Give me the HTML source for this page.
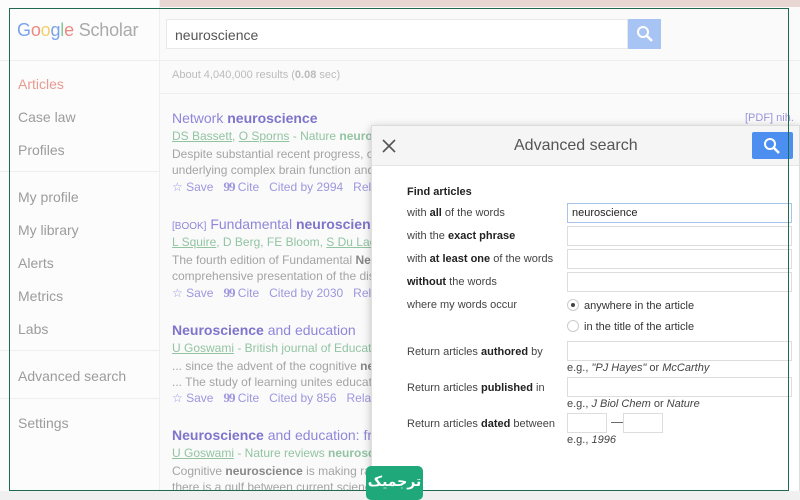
<!DOCTYPE html>
<html><head><meta charset="utf-8"><style>
*{margin:0;padding:0;box-sizing:border-box}
body{width:800px;height:500px;overflow:hidden;background:#fafafa;font-family:"Liberation Sans",Arial,sans-serif;position:relative;color:#777}
.a{position:absolute;white-space:nowrap}
.side{position:absolute;left:0;top:0;width:160px;height:500px;background:#fcfcfc;border-right:1px solid #eee}
.s{position:absolute;left:18px;font-size:14px;color:#9c9c9c}
.t{font-size:14px;color:#8f86da}
.t b{color:#7e74cc}
.au{font-size:12px;color:#92c4a2}
.au u{color:#92c4a2}
.sn{font-size:12px;color:#a4a4a4;line-height:16px}
.sn b{color:#888}
.act{font-size:12px;color:#9d97de}
.q{font-family:"Liberation Serif",serif;font-weight:bold;font-size:13px;letter-spacing:-1px}
.dlg{position:absolute;left:371px;top:125px;width:429px;height:368px;background:#fff;box-shadow:0 2px 8px rgba(0,0,0,.25);border:1px solid #ddd}
.hd{position:absolute;left:0;top:0;width:100%;height:40px;background:#f5f5f5;border-bottom:1px solid #e5e5e5}
.l{position:absolute;left:35px;font-size:11px;color:#444}
.l b{color:#222}
.in{position:absolute;left:195px;width:225px;height:20px;border:1px solid #ddd;background:#fff}
.eg{position:absolute;left:195px;font-size:11px;color:#444}
</style></head><body>
<div class="a" style="left:0;top:0;width:800px;height:7px;background:#e8d6d2"></div>
<div class="side"></div>
<div class="a" style="left:0;top:60px;width:800px;height:1px;background:#eee"></div>
<div class="a" style="left:17px;top:20px;font-size:18px;letter-spacing:-0.2px"><span style="color:#7ba3ec">G</span><span style="color:#ec8a80">o</span><span style="color:#f3cf6a">o</span><span style="color:#7ba3ec">g</span><span style="color:#88c89a">l</span><span style="color:#ec8a80">e</span> <span style="color:#aaa">Scholar</span></div>
<div class="a" style="left:166px;top:19px;width:462px;height:30px;background:#fff;border:1px solid #e8e8e8;font-size:14px;color:#555;padding:7px 8px">neuroscience</div>
<div class="a" style="left:628px;top:19px;width:33px;height:30px;background:#a8c4f5"><svg width="33" height="30"><circle cx="15" cy="13" r="5" stroke="#fff" stroke-width="2" fill="none"/><path d="M19 17l5 5" stroke="#fff" stroke-width="2.5"/></svg></div>
<div class="s" style="top:76px;color:#e99a90">Articles</div>
<div class="s" style="top:109px">Case law</div>
<div class="s" style="top:142px">Profiles</div>
<div class="a" style="left:0;top:171px;width:160px;height:1px;background:#eee"></div>
<div class="s" style="top:189px">My profile</div>
<div class="s" style="top:222px">My library</div>
<div class="s" style="top:255px">Alerts</div>
<div class="s" style="top:288px">Metrics</div>
<div class="s" style="top:321px">Labs</div>
<div class="a" style="left:0;top:350px;width:160px;height:1px;background:#eee"></div>
<div class="s" style="top:368px">Advanced search</div>
<div class="a" style="left:0;top:398px;width:160px;height:1px;background:#eee"></div>
<div class="s" style="top:415px">Settings</div>
<div class="a" style="left:172px;top:69px;font-size:11px;color:#bbb">About 4,040,000 results (<b>0.08</b> sec)</div>
<div class="a" style="left:160px;top:93px;width:640px;height:1px;background:#eee"></div>

<div class="a t" style="left:172px;top:110px">Network <b>neuroscience</b></div>
<div class="a au" style="left:172px;top:129px"><u>DS Bassett</u>, <u>O Sporns</u> - Nature <b>neuroscience</b></div>
<div class="a sn" style="left:172px;top:146px">Despite substantial recent progress, our u<br>underlying complex brain function and cog</div>
<div class="a act" style="left:172px;top:179px">☆ Save &nbsp; <span class="q">99</span> Cite &nbsp; Cited by 2994 &nbsp; Relat</div>
<div class="a" style="left:745px;top:112px;font-size:11px;color:#9a94dc">[PDF] nih.</div>

<div class="a t" style="left:172px;top:216px"><span style="font-size:10px">[BOOK]</span> Fundamental <b>neuroscien</b></div>
<div class="a au" style="left:172px;top:235px"><u>L Squire</u>, D Berg, FE Bloom, <u>S Du Lac</u>, A</div>
<div class="a sn" style="left:172px;top:252px">The fourth edition of Fundamental <b>Neuros</b><br>comprehensive presentation of the discipl</div>
<div class="a act" style="left:172px;top:285px">☆ Save &nbsp; <span class="q">99</span> Cite &nbsp; Cited by 2030 &nbsp; Relat</div>

<div class="a t" style="left:172px;top:322px"><b>Neuroscience</b> and education</div>
<div class="a au" style="left:172px;top:341px"><u>U Goswami</u> - British journal of Educationa</div>
<div class="a sn" style="left:172px;top:358px">... since the advent of the cognitive <b>neuro</b><br>... The study of learning unites education</div>
<div class="a act" style="left:172px;top:390px">☆ Save &nbsp; <span class="q">99</span> Cite &nbsp; Cited by 856 &nbsp; Relate</div>

<div class="a t" style="left:172px;top:427px"><b>Neuroscience</b> and education: fr</div>
<div class="a au" style="left:172px;top:446px"><u>U Goswami</u> - Nature reviews <b>neuroscien</b></div>
<div class="a sn" style="left:172px;top:463px">Cognitive <b>neuroscience</b> is making rapid progress that is highly relevant to education. However,<br>there is a gulf between current science and classroom applications. Most scientists ...</div>

<div class="dlg">
<div class="hd"></div>
<svg class="a" style="left:10px;top:13px" width="14" height="14"><path d="M1 1L13 13M13 1L1 13" stroke="#555" stroke-width="1.6"/></svg>
<div class="a" style="left:142px;top:11px;font-size:16px;color:#555">Advanced search</div>
<div class="a" style="left:380px;top:6px;width:41px;height:27px;background:#4d8ff0;border-radius:2px"><svg width="41" height="27"><circle cx="18" cy="12" r="5" stroke="#fff" stroke-width="2" fill="none"/><path d="M22 16l5 5" stroke="#fff" stroke-width="2.5"/></svg></div>
<div class="l" style="top:60px"><b>Find articles</b></div>
<div class="l" style="top:81px">with <b>all</b> of the words</div>
<div class="in" style="top:77px;border-color:#a8c4ea;font-size:11px;color:#222;padding:3px 4px">neuroscience</div>
<div class="l" style="top:104px">with the <b>exact phrase</b></div>
<div class="in" style="top:100px"></div>
<div class="l" style="top:127px">with <b>at least one</b> of the words</div>
<div class="in" style="top:123px"></div>
<div class="l" style="top:150px"><b>without</b> the words</div>
<div class="in" style="top:146px"></div>
<div class="l" style="top:173px">where my words occur</div>
<div class="a" style="left:195px;top:173px;width:12px;height:12px;border:1px solid #ccc;border-radius:50%"><div style="width:4px;height:4px;background:#444;border-radius:50%;margin:3px"></div></div>
<div class="a" style="left:212px;top:174px;font-size:11px;color:#333">anywhere in the article</div>
<div class="a" style="left:195px;top:194px;width:12px;height:12px;border:1px solid #ccc;border-radius:50%"></div>
<div class="a" style="left:212px;top:195px;font-size:11px;color:#333">in the title of the article</div>
<div class="l" style="top:220px">Return articles <b>authored</b> by</div>
<div class="in" style="top:215px"></div>
<div class="eg" style="top:236px">e.g., <i>"PJ Hayes"</i> or <i>McCarthy</i></div>
<div class="l" style="top:256px">Return articles <b>published</b> in</div>
<div class="in" style="top:251px"></div>
<div class="eg" style="top:272px">e.g., <i>J Biol Chem</i> or <i>Nature</i></div>
<div class="l" style="top:292px">Return articles <b>dated</b> between</div>
<div class="in" style="top:287px;width:40px"></div>
<div class="a" style="left:239px;top:288px;font-size:13px;color:#555">—</div>
<div class="in" style="top:287px;left:251px;width:40px"></div>
<div class="eg" style="top:308px">e.g., <i>1996</i></div>
</div>

<div class="a" style="left:9px;top:8px;width:780px;height:483px;border:1px solid #1e6b50"></div>
<div class="a" style="left:0;top:491px;width:800px;height:9px;background:#f0f0f0"></div>
<div class="a" style="left:366px;top:466px;width:57px;height:34px;background:#1fa87a;border-radius:5px;color:#fff;font-size:14px;font-weight:bold;text-align:center;line-height:32px;font-family:'DejaVu Sans',sans-serif">ترجمیک</div>
</body></html>
